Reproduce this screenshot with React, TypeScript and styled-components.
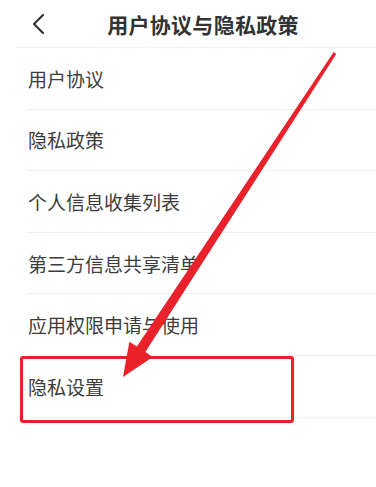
import React from 'react';
import styled, { createGlobalStyle } from 'styled-components';

const GlobalStyle = createGlobalStyle`
    html, body {
        margin: 0;
        padding: 0;
        background: #ffffff;
    }
    body {
        font-family: "Noto Sans CJK SC", "Noto Sans", sans-serif;
        -webkit-font-smoothing: antialiased;
    }
`;

const Page = styled('div')`
    position: relative;
    width: 376px;
    height: 487px;
    overflow: hidden;
    background: #ffffff;
`;

const Header = styled('div')`
    display: flex;
    align-items: center;
    height: 47px;
    margin-left: 15px;
    border-bottom: 1px solid #f3f3f3;
`;

const BackButton = styled('button')`
    display: flex;
    align-items: center;
    justify-content: center;
    width: 45px;
    height: 47px;
    padding: 0;
    border: none;
    background: none;
    color: #333333;
`;

const Title = styled('h1')`
    flex: 1;
    margin: 0;
    padding-right: 30px;
    text-align: center;
    font-size: 21px;
    font-weight: 700;
    color: #333333;
    letter-spacing: 0.3px;
`;

const List = styled('ul')`
    margin: 0;
    padding: 0 0 0 27px;
    list-style: none;
`;

const Item = styled('li')`
    display: flex;
    align-items: center;
    height: 60.6px;
    padding-left: 1px;
    border-bottom: 1px solid #f1f1f1;
    font-size: 19px;
    color: #3c3c3c;
`;

const Annotation = styled('svg')`
    position: absolute;
    left: 0;
    top: 0;
    pointer-events: none;
`;

const ITEMS = ['用户协议', '隐私政策', '个人信息收集列表', '第三方信息共享清单', '应用权限申请与使用', '隐私设置'];

// arrow from top-right down to the last row
const tip = { x: 123, y: 377 };
const start = { x: 335, y: 53 };
const len = Math.hypot(start.x - tip.x, start.y - tip.y);
const u = { x: (start.x - tip.x) / len, y: (start.y - tip.y) / len };
const p = { x: -u.y, y: u.x };
const headLen = 33;
const headHalf = 14;
const base = { x: tip.x + u.x * headLen, y: tip.y + u.y * headLen };
const pt = (x: number, y: number) => `${x.toFixed(1)},${y.toFixed(1)}`;
const arrowPoints = [
    pt(start.x + p.x * 1.6, start.y + p.y * 1.6),
    pt(base.x + p.x * 5, base.y + p.y * 5),
    pt(base.x + p.x * headHalf, base.y + p.y * headHalf),
    pt(tip.x, tip.y),
    pt(base.x - p.x * headHalf, base.y - p.y * headHalf),
    pt(base.x - p.x * 5, base.y - p.y * 5),
    pt(start.x - p.x * 1.6, start.y - p.y * 1.6),
].join(' ');

export default function App() {
    return (
        <Page>
            <GlobalStyle />
            <Header>
                <BackButton aria-label="返回">
                    <svg width="14" height="22" viewBox="0 0 14 22">
                        <path d="M12 2 L3 11 L12 20" fill="none" stroke="#333" strokeWidth="2.2" strokeLinecap="round" strokeLinejoin="round" />
                    </svg>
                </BackButton>
                <Title>用户协议与隐私政策</Title>
            </Header>
            <List>
                {ITEMS.map((item) => (
                    <Item key={item}>{item}</Item>
                ))}
            </List>
            <Annotation width="376" height="487" viewBox="0 0 376 487">
                <rect x="21.5" y="357.5" width="271" height="64" rx="1.5" fill="none" stroke="#e8212b" strokeWidth="3" />
                <polygon points={arrowPoints} fill="#e8212b" />
            </Annotation>
        </Page>
    );
}
